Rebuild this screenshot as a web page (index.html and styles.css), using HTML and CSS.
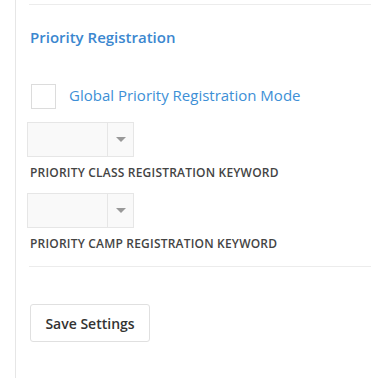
FILE: index.html
```html
<!DOCTYPE html>
<html>
<head>
<meta charset="utf-8">
<link rel="stylesheet" href="styles.css">
</head>
<body>
<div class="panel">
  <hr class="rule rule-top">
  <h3 class="heading">Priority Registration</h3>
  <label class="check-row">
    <span class="checkbox"></span>
    <span class="check-label">Global Priority Registration Mode</span>
  </label>
  <div class="field">
    <div class="select"><span class="select-value"></span><span class="select-arrow"></span></div>
    <div class="field-label">PRIORITY CLASS REGISTRATION KEYWORD</div>
  </div>
  <div class="field">
    <div class="select"><span class="select-value"></span><span class="select-arrow"></span></div>
    <div class="field-label">PRIORITY CAMP REGISTRATION KEYWORD</div>
  </div>
  <hr class="rule rule-bottom">
  <button class="btn">Save Settings</button>
</div>
</body>
</html>
```
FILE: styles.css
```css
html, body {
  margin: 0;
  padding: 0;
  background: #fff;
  font-family: "Open Sans", "Liberation Sans", sans-serif;
}
.panel {
  margin-left: 15px;
  border-left: 1px solid #e6e6e6;
  min-height: 378px;
  padding-left: 13px;
  padding-top: 4px;
  box-sizing: border-box;
}
.rule {
  border: 0;
  border-top: 1px solid #ececec;
  margin: 0;
}
.heading {
  margin: 22px 0 0 1px;
  font-size: 15px;
  line-height: 20px;
  font-weight: 600;
  color: #3b87cf;
}
.check-row {
  display: flex;
  align-items: center;
  margin-top: 37px;
  margin-left: 2px;
}
.checkbox {
  width: 23px;
  height: 23px;
  border: 1px solid #dcdcdc;
  background: #fff;
  flex: none;
}
.check-label {
  margin-left: 13px;
  font-size: 15px;
  color: #3d8fd6;
  line-height: 20px;
  margin-top: -3px;
}
.field {
  margin-top: 13px;
}
.field + .field {
  margin-top: 12px;
}
.select {
  display: flex;
  width: 105px;
  height: 33px;
  border: 1px solid #e6e6e6;
  background: #f9f9f9;
  margin-left: -2px;
}
.select-value {
  flex: 1;
}
.select-arrow {
  width: 25px;
  border-left: 1px solid #e6e6e6;
  display: flex;
  align-items: center;
  justify-content: center;
}
.select-arrow::after {
  content: "";
  width: 0;
  height: 0;
  border-left: 5px solid transparent;
  border-right: 5px solid transparent;
  border-top: 5px solid #999;
}
.field-label {
  margin-top: 8px;
  margin-left: 1px;
  font-size: 12px;
  letter-spacing: 0.2px;
  line-height: 16px;
  font-weight: 600;
  color: #444;
}
.rule-bottom {
  margin-top: 14px;
}
.btn {
  display: block;
  margin-top: 37px;
  margin-left: 1px;
  width: 120px;
  height: 38px;
  border: 1px solid #e0e0e0;
  border-radius: 3px;
  background: #fff;
  font-family: "Open Sans", "Liberation Sans", sans-serif;
  font-size: 14px;
  font-weight: 600;
  color: #333;
  padding: 0;
}
```
